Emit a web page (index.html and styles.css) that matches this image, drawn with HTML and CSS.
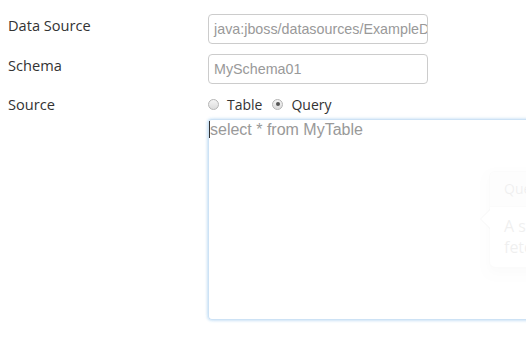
FILE: index.html
```html
<!DOCTYPE html>
<html>
<head>
<meta charset="utf-8">
<link rel="stylesheet" href="styles.css">
</head>
<body>
<div class="form">
  <div class="row">
    <label class="label">Data Source</label>
    <div class="field"><div class="input">java:jboss/datasources/ExampleDS</div></div>
  </div>
  <div class="row">
    <label class="label">Schema</label>
    <div class="field"><div class="input">MySchema01</div></div>
  </div>
  <div class="row row-source">
    <label class="label">Source</label>
    <div class="field">
      <div class="radios">
        <span class="radio"></span><span class="rlabel">Table</span>
        <span class="radio checked"></span><span class="rlabel">Query</span>
      </div>
      <div class="textarea"><span class="caret"></span>select * from MyTable</div>
    </div>
  </div>
</div>
<div class="popover">
  <div class="arrow"></div>
  <div class="ptitle">Query</div>
  <div class="pcontent">A statement<br>fetching the data</div>
</div>
</body>
</html>
```
FILE: styles.css
```css
html, body { margin: 0; padding: 0; background: #fff; overflow: hidden; }
body { width: 526px; height: 344px; position: relative; }
.form { padding: 14px 0 0 8px; display: flex; flex-direction: column; gap: 10px; }
.row { display: grid; grid-template-columns: 200px auto; align-items: start; }
.label { font-family: "Open Sans", sans-serif; font-size: 14.6px; color: #333; line-height: 20px; padding-top: 1px; }
.row-source .label { padding-top: 0; }
.input {
  box-sizing: border-box; width: 220px; height: 30px; border: 1px solid #ccc; border-radius: 4px;
  font-family: "Liberation Sans", Arial, sans-serif; font-size: 14.3px; color: #999;
  padding: 0 5px; line-height: 28px; white-space: nowrap; overflow: hidden;
}
.radios { display: flex; align-items: center; height: 20px; margin-bottom: 5px;
  font-family: "Open Sans", sans-serif; font-size: 14px; color: #333; }
.radio { width: 11px; height: 11px; border-radius: 50%; border: 1px solid #b5b5b5; box-sizing: border-box;
  background: linear-gradient(#f4f4f4, #dcdcdc); margin-right: 8px; position: relative; }
.radio.checked::after { content: ""; position: absolute; left: 2.5px; top: 2.5px; width: 4px; height: 4px; border-radius: 50%; background: #555; }
.rlabel { margin-right: 10px; }
.textarea {
  box-sizing: border-box; width: 340px; height: 201px; border: 1px solid #cde2f5; border-right: none;
  border-radius: 4px 0 0 4px; box-shadow: -1px 0 3px rgba(102,175,233,0.2), 0 1px 3px rgba(102,175,233,0.2), 0 -1px 3px rgba(102,175,233,0.12);
  font-family: "Liberation Sans", Arial, sans-serif; font-size: 16px; color: #999; padding: 1px 0 0 0; line-height: 18px;
}
.caret { display: inline-block; width: 1px; height: 17px; background: #333; vertical-align: -3px; }
.popover {
  position: absolute; left: 489px; top: 171px; width: 220px; height: 97px; box-sizing: border-box;
  border: 1px solid rgba(0,0,0,0.2); border-radius: 6px; background: #fff; opacity: 0.07;
  box-shadow: 0 5px 10px rgba(0,0,0,0.2);
  font-family: "Open Sans", sans-serif;
}
.arrow { position: absolute; left: -10px; top: 37px; width: 0; height: 0;
  border-top: 10px solid transparent; border-bottom: 10px solid transparent; border-right: 10px solid rgba(0,0,0,0.4); }
.arrow::after { content: ""; position: absolute; left: 1px; top: -9px; border-top: 9px solid transparent; border-bottom: 9px solid transparent; border-right: 9px solid #fff; }
.ptitle { background: #e8e8e8; border-bottom: 1px solid #d0d0d0; border-radius: 5px 5px 0 0; padding: 8px 14px; font-size: 14px; color: #333; line-height: 18px; }
.pcontent { padding: 9px 14px; font-size: 16px; line-height: 21px; color: #333; white-space: nowrap; }
```
